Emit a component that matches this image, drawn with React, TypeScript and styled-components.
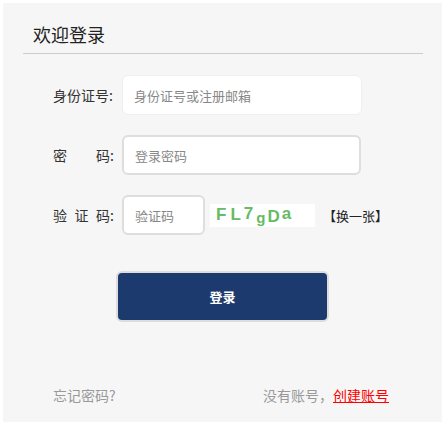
import React from "react";
import styled, { createGlobalStyle } from "styled-components";

const Global = createGlobalStyle`
  html, body { margin: 0; padding: 0; background: #ffffff; }
  body { font-family: "Noto Sans CJK SC", "Noto Sans", sans-serif; }
`;

const Panel = styled.div`
  margin: 3px 0 0 3px;
  width: 439px;
  height: 419px;
  background: #f6f6f6;
  display: flex;
  flex-direction: column;
`;

const Header = styled.div`
  margin: 0 19px 0 20px;
  padding: 18px 0 6px 10px;
  border-bottom: 1px solid #cccccc;
`;

const Title = styled.h1`
  margin: 0;
  font-size: 18px;
  line-height: 26px;
  font-weight: 400;
  color: #222;
`;

const Form = styled.div`
  display: flex;
  flex-direction: column;
  gap: 20px;
  padding: 21px 0 0 50px;
`;

const Row = styled.div`
  display: flex;
  align-items: center;
`;

const Label = styled.div`
  width: 61px;
  margin-right: 8px;
  display: flex;
  justify-content: space-between;
  font-size: 14px;
  color: #333;
  white-space: nowrap;
`;

const Input = styled.input<{ $width: number; $strong?: boolean }>`
  box-sizing: border-box;
  width: ${(p) => p.$width}px;
  height: 40px;
  padding: 0 11px;
  border: ${(p) => (p.$strong ? "2px solid #dedede" : "1px solid #efefef")};
  border-radius: 6px;
  background: #fff;
  font-family: inherit;
  font-size: 13px;
  color: #333;
  outline: none;
  &::placeholder { color: #888; }
`;

const Captcha = styled.div`
  box-sizing: border-box;
  width: 105px;
  height: 23px;
  margin-left: 5px;
  padding-left: 6px;
  background: #fff;
  display: flex;
  align-items: center;
  font-family: "Liberation Sans", Arial, sans-serif;
  font-weight: 700;
  color: #66bb66;
`;

const Char = styled.span<{ $size: number; $shift: number; $gap: number }>`
  font-size: ${(p) => p.$size}px;
  line-height: 1;
  margin-right: ${(p) => p.$gap}px;
  transform: translateY(${(p) => p.$shift}px);
`;

const Refresh = styled.span`
  margin-left: 8px;
  font-size: 13px;
  color: #222;
`;

const ButtonWrap = styled.div`
  display: flex;
  justify-content: center;
  padding-top: 36px;
`;

const Submit = styled.button`
  box-sizing: border-box;
  width: 213px;
  height: 51px;
  border: 2px solid #dddddd;
  border-radius: 6px;
  background: #1c3a6e;
  color: #fff;
  font-family: inherit;
  font-size: 13px;
  font-weight: 700;
  cursor: pointer;
`;

const Footer = styled.div`
  margin-top: auto;
  margin-bottom: 17px;
  padding: 0 53px 0 50px;
  display: flex;
  justify-content: space-between;
  font-size: 14px;
  color: #999;
`;

const Link = styled.a`
  color: #ff0000;
  text-decoration: underline;
`;

const chars = [
  { c: "F", size: 17, shift: -1, gap: 4 },
  { c: "L", size: 17, shift: -1, gap: 3 },
  { c: "7", size: 17, shift: -2, gap: 3 },
  { c: "g", size: 15, shift: 2, gap: 2 },
  { c: "D", size: 17, shift: 1, gap: 2 },
  { c: "a", size: 17, shift: -2, gap: 0 },
];

export default function App() {
  return (
    <>
      <Global />
      <Panel>
        <Header>
          <Title>欢迎登录</Title>
        </Header>
        <Form>
          <Row>
            <Label><span>身份证号:</span></Label>
            <Input $width={240} placeholder="身份证号或注册邮箱" />
          </Row>
          <Row>
            <Label><span>密</span><span>码:</span></Label>
            <Input $width={239} $strong placeholder="登录密码" />
          </Row>
          <Row>
            <Label><span>验</span><span>证</span><span>码:</span></Label>
            <Input $width={83} $strong placeholder="验证码" />
            <Captcha>
              {chars.map((ch, i) => (
                <Char key={i} $size={ch.size} $shift={ch.shift} $gap={ch.gap}>{ch.c}</Char>
              ))}
            </Captcha>
            <Refresh>【换一张】</Refresh>
          </Row>
        </Form>
        <ButtonWrap>
          <Submit>登录</Submit>
        </ButtonWrap>
        <Footer>
          <span>忘记密码?</span>
          <span>没有账号，<Link href="#">创建账号</Link></span>
        </Footer>
      </Panel>
    </>
  );
}
